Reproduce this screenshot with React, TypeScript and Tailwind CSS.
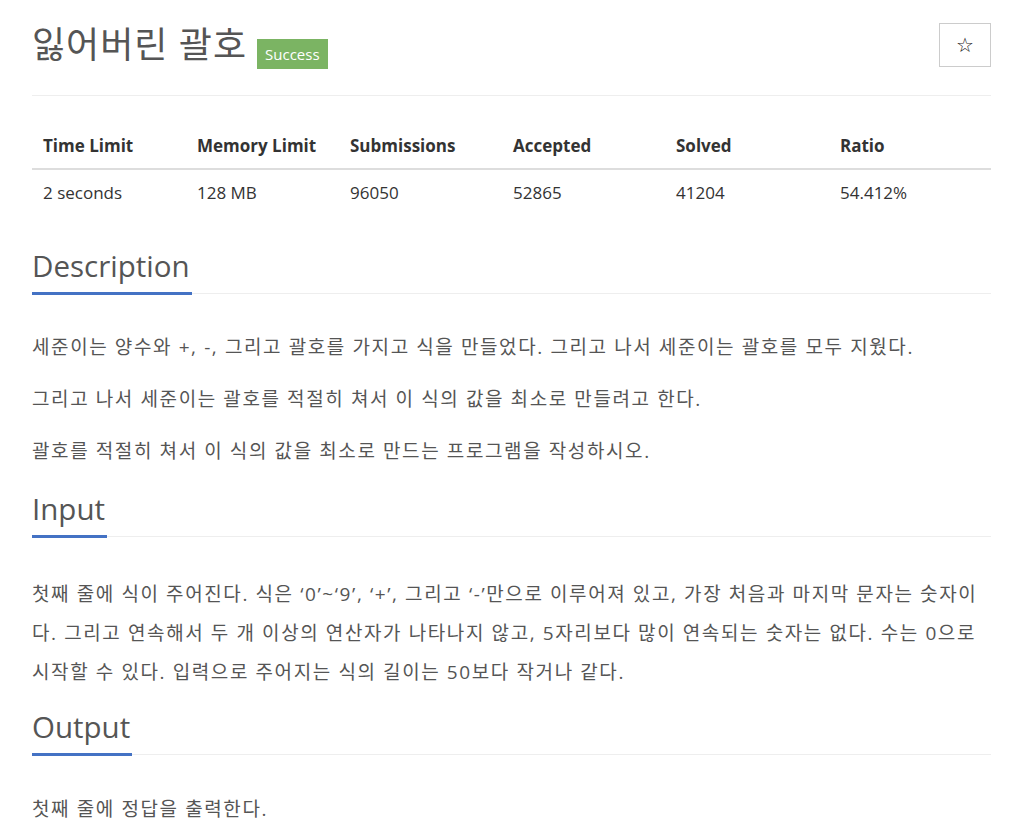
const font = { fontFamily: '"Open Sans", "Noto Sans CJK KR", sans-serif' };

const stats = [
  ["Time Limit", "2 seconds"],
  ["Memory Limit", "128 MB"],
  ["Submissions", "96050"],
  ["Accepted", "52865"],
  ["Solved", "41204"],
  ["Ratio", "54.412%"],
];

function Headline({ title }: { title: string }) {
  return (
    <div className="flex border-b border-[#eee]">
      <h2 className="-mb-[2px] border-b-[3px] border-[#4472c4] pb-[10px] pr-[2px] text-[29.5px] leading-[33px] font-normal text-[#555]">
        {title}
      </h2>
    </div>
  );
}

const para = "mb-[13px] text-[19px] leading-[39px] tracking-[1.6px] text-[#555]";

export default function App() {
  return (
    <div className="bg-white pb-6 pl-[32px] pr-[39px] pt-[23px]" style={font}>
      <div className="flex items-start justify-between">
        <div className="flex items-end gap-[10px]">
          <h1 className="text-[36px] leading-[44px] font-normal tracking-[1px] text-[#555]">잃어버린 괄호</h1>
          <span className="mb-[-2px] bg-[#7bb463] px-[8px] text-[15px] leading-[30px] text-white">Success</span>
        </div>
        <button className="flex h-[44px] w-[52px] items-center justify-center border border-[#ccc] text-[20px] text-[#222]" style={{ fontFamily: '"DejaVu Sans", sans-serif' }}>
          ☆
        </button>
      </div>
      <div className="mt-[28px] border-t border-[#eee]" />

      <div className="mt-[28px] grid grid-cols-[154px_153px_163px_163px_164px_1fr]">
        {stats.map(([h]) => (
          <div key={h} className="border-b-2 border-[#ddd] px-[11px] text-[17px] leading-[44px] font-bold text-[#333]">
            {h}
          </div>
        ))}
        {stats.map(([h, v]) => (
          <div key={h + "v"} className="px-[11px] text-[17px] leading-[46px] text-[#333]">
            {v}
          </div>
        ))}
      </div>

      <section className="mt-[33px]">
        <Headline title="Description" />
        <div className="mt-[34px]">
          <p className={para}>세준이는 양수와 +, -, 그리고 괄호를 가지고 식을 만들었다. 그리고 나서 세준이는 괄호를 모두 지웠다.</p>
          <p className={para}>그리고 나서 세준이는 괄호를 적절히 쳐서 이 식의 값을 최소로 만들려고 한다.</p>
          <p className={para}>괄호를 적절히 쳐서 이 식의 값을 최소로 만드는 프로그램을 작성하시오.</p>
        </div>
      </section>

      <section className="mt-[21px]">
        <Headline title="Input" />
        <div className="mt-[38px]">
          <p className={para}>
            첫째 줄에 식이 주어진다. 식은 ‘0’~‘9’, ‘+’, 그리고 ‘-’만으로 이루어져 있고, 가장 처음과 마지막 문자는 숫자이
            <br />
            다. 그리고 연속해서 두 개 이상의 연산자가 나타나지 않고, 5자리보다 많이 연속되는 숫자는 없다. 수는 0으로
            <br />
            시작할 수 있다. 입력으로 주어지는 식의 길이는 50보다 작거나 같다.
          </p>
        </div>
      </section>

      <section className="mt-[18px]">
        <Headline title="Output" />
        <div className="mt-[35px]">
          <p className={para}>첫째 줄에 정답을 출력한다.</p>
        </div>
      </section>
    </div>
  );
}
